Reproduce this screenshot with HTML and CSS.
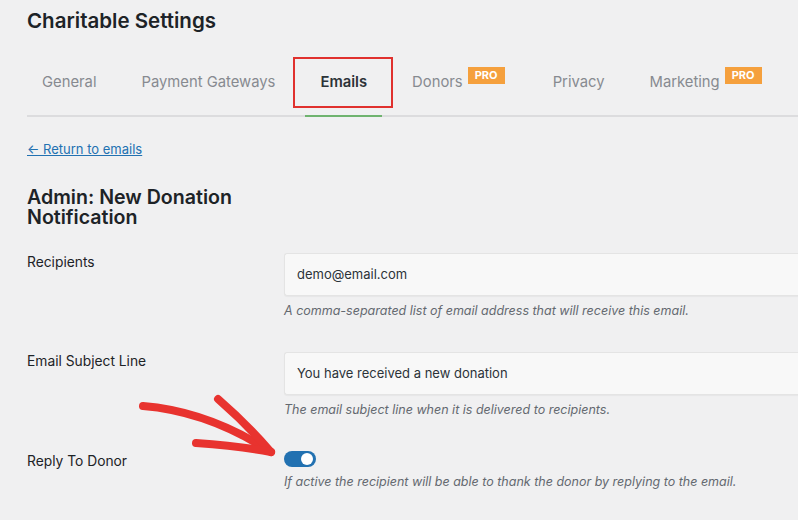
FILE: index.html
```html
<!DOCTYPE html>
<html>
<head>
<meta charset="utf-8">
<link rel="stylesheet" href="styles.css">
</head>
<body>
<div class="page">
  <h1 class="title">Charitable Settings</h1>
  <nav class="tabs">
    <a class="tab">General</a>
    <a class="tab">Payment Gateways</a>
    <a class="tab active">Emails</a>
    <a class="tab">Donors<span class="pro">PRO</span></a>
    <a class="tab">Privacy</a>
    <a class="tab">Marketing<span class="pro">PRO</span></a>
  </nav>
  <a class="back" href="#">← Return to emails</a>
  <h2 class="heading">Admin: New Donation Notification</h2>
  <div class="form">
    <div class="label">Recipients</div>
    <div class="field">
      <div class="input">demo@email.com</div>
      <p class="desc">A comma-separated list of email address that will receive this email.</p>
    </div>
    <div class="label">Email Subject Line</div>
    <div class="field">
      <div class="input">You have received a new donation</div>
      <p class="desc">The email subject line when it is delivered to recipients.</p>
    </div>
    <div class="label toggle-label">Reply To Donor</div>
    <div class="field">
      <span class="toggle"><span class="knob"></span></span>
      <p class="desc">If active the recipient will be able to thank the donor by replying to the email.</p>
    </div>
  </div>
  <svg class="arrow" width="160" height="90" viewBox="130 380 160 90">
    <path d="M143 406 C 180 409, 222 420, 271 452" fill="none" stroke="#e8332f" stroke-width="8" stroke-linecap="round"/>
    <path d="M218 399 C 240 418, 258 437, 271 452" fill="none" stroke="#e8332f" stroke-width="8" stroke-linecap="round"/>
    <path d="M196 443 C 225 445, 250 448, 271 452" fill="none" stroke="#e8332f" stroke-width="8" stroke-linecap="round"/>
  </svg>
</div>
</body>
</html>
```
FILE: styles.css
```css
html, body {
  margin: 0;
  padding: 0;
  background: #f0f0f1;
  overflow: hidden;
}
body {
  width: 798px;
  height: 520px;
  font-family: Inter, "Liberation Sans", sans-serif;
  color: #1d2327;
}
.page {
  position: relative;
  padding-left: 27px;
  height: 520px;
  overflow: hidden;
}
.title {
  margin: 0;
  padding-top: 7px;
  font-size: 20.5px;
  line-height: 28px;
  font-weight: 600;
  color: #1d2327;
}
.tabs {
  display: flex;
  gap: 15px;
  margin-top: 22px;
  height: 58px;
  border-bottom: 2px solid #dcdcde;
}
.tab {
  position: relative;
  display: block;
  padding: 15px 15px 0;
  font-size: 14.8px;
  line-height: 20px;
  color: #878a90;
  white-space: nowrap;
}
.tab.active {
  color: #2c3338;
  font-weight: 600;
}
.tab.active::before {
  content: "";
  position: absolute;
  left: -12px;
  right: -11px;
  top: 0;
  height: 47px;
  border: 2px solid #e0312e;
}
.tab.active::after {
  content: "";
  position: absolute;
  left: 0;
  right: 0;
  bottom: -2px;
  height: 2px;
  background: #6fb36f;
}
.pro {
  display: inline-block;
  vertical-align: top;
  margin-left: 5px;
  margin-right: 3px;
  margin-top: -5px;
  width: 37px;
  height: 17px;
  line-height: 17px;
  text-align: center;
  background: #f5a03d;
  color: #fff;
  font-size: 11px;
  font-weight: 700;
}
.back {
  display: inline-block;
  margin-top: 23px;
  font-size: 13px;
  line-height: 18px;
  color: #2271b1;
  text-decoration: underline;
}
.heading {
  margin: 29px 0 0;
  width: 240px;
  font-size: 19.6px;
  line-height: 20px;
  font-weight: 600;
  color: #1d2327;
}
.form {
  display: grid;
  grid-template-columns: 257px 600px;
  row-gap: 32px;
  margin-top: 26px;
}
.label {
  font-size: 13.8px;
  line-height: 18px;
  color: #1d2327;
}
.toggle-label {
  padding-top: 1px;
}
.input {
  box-sizing: border-box;
  height: 43px;
  padding: 0 12px;
  background: #f8f8f8;
  border: 1px solid #e4e4e4;
  border-right: none;
  border-radius: 3px 0 0 3px;
  box-shadow: 0 1px 1px rgba(0,0,0,0.04);
  font-size: 13px;
  line-height: 41px;
  color: #2c3338;
}
.desc {
  margin: 6px 0 0;
  font-size: 12.5px;
  line-height: 18px;
  font-style: italic;
  color: #646970;
}
.toggle {
  display: block;
  position: relative;
  width: 32px;
  height: 16px;
  border-radius: 8px;
  background: #2271b1;
}
.knob {
  position: absolute;
  right: 3px;
  top: 2px;
  width: 12px;
  height: 12px;
  border-radius: 50%;
  background: #fff;
}
.arrow {
  position: absolute;
  left: 130px;
  top: 380px;
}
```
